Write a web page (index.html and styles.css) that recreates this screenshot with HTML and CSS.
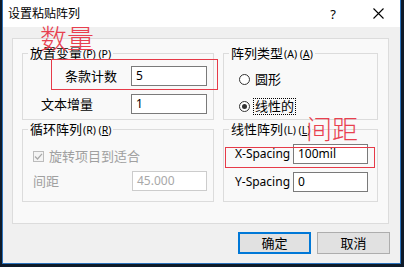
FILE: index.html
```html
<!DOCTYPE html>
<html lang="zh-CN">
<head>
  <meta charset="UTF-8" />
  <title>设置粘贴阵列</title>
  <link rel="stylesheet" href="styles.css">
</head>
<body>

<div class="window">
  <div class="titlebar">
    <span class="title">设置粘贴阵列</span>
    <span class="help">?</span>
    <svg class="close" width="11" height="11" viewBox="0 0 11 11">
      <path d="M0.5 0.5 L10.5 10.5 M10.5 0.5 L0.5 10.5" stroke="#000" stroke-width="1.1" fill="none"/>
    </svg>
  </div>

  <div class="content">
    <div class="panel">
      <div class="group g-place">
        <div class="legend">放置变量<span class="acc">(P) (<u>P</u>)</span></div>
        <div class="row first">
          <span class="lbl ind-count">条款计数</span>
          <div class="field">5</div>
        </div>
        <div class="row">
          <span class="lbl ind-text">文本增量</span>
          <div class="field">1</div>
        </div>
      </div>

      <div class="group g-type">
        <div class="legend">阵列类型<span class="acc">(A) (<u>A</u>)</span></div>
        <div class="radio first"><span class="dot"></span><span class="rtext">圆形</span></div>
        <div class="radio"><span class="dot on"></span><span class="rtext focus">线性的</span></div>
      </div>

      <div class="group g-loop">
        <div class="legend">循环阵列<span class="acc">(R) (<u>R</u>)</span></div>
        <div class="check">
          <svg class="box" width="11" height="11" viewBox="0 0 11 11">
            <rect x="0.5" y="0.5" width="10" height="10" fill="#f4f4f4" stroke="#bcbcbc"/>
            <path d="M2 5.5 L4.5 8 L9 2.8" stroke="#a8a8a8" stroke-width="1.2" fill="none"/>
          </svg>
          <span class="ctext">旋转项目到适合</span>
        </div>
        <div class="row">
          <span class="lbl dim">间距</span>
          <div class="field disabled">45.000</div>
        </div>
      </div>

      <div class="group g-linear">
        <div class="legend">线性阵列<span class="acc">(L) (<u>L</u>)</span></div>
        <div class="row first">
          <span class="lbl latin">X-Spacing</span>
          <div class="field">100mil</div>
        </div>
        <div class="row">
          <span class="lbl latin">Y-Spacing</span>
          <div class="field">0</div>
        </div>
      </div>
    </div>

    <div class="buttons">
      <button class="btn default">确定</button>
      <button class="btn">取消</button>
    </div>
  </div>

  <!-- hand-drawn annotations over the dialog -->
  <div class="mark mark-count"></div>
  <div class="mark mark-gap"></div>
  <div class="note note-count">数量</div>
  <div class="note note-gap">间距</div>
</div>

</body>
</html>
```

FILE: styles.css
```css
:root {
  --frame: #0e1a29;
  --edge: #2c73bd;
  --dialog-bg: #f0f0f0;
  --panel-bg: #f9f9f9;
  --line: #dcdcdc;
  --red: #e8404f;
}
* { box-sizing: border-box; }

body {
  margin: 0;
  background: var(--frame);
  font-family: "Noto Sans", "Noto Sans CJK SC", sans-serif;
  font-size: 13px;
  color: #000;
}

.window {
  position: relative;
  margin-left: 2px;
  width: 399px;
  height: 264px;
  background: var(--dialog-bg);
  border: 1px solid var(--edge);
  border-top: none;
}

.titlebar {
  height: 27px;
  background: #fff;
  display: flex;
  align-items: center;
  padding-left: 5px;
}

.title {
  font-size: 12px;
  line-height: 14px;
  margin-top: 1px;
}

.help {
  margin-left: auto;
  font-size: 13px;
  line-height: 14px;
  margin-right: 37px;
}

.close {
  margin-right: 16px;
}

.content {
  padding: 11px 10px 0 9px;
}

.panel {
  width: 377px;
  height: 186px;
  background: var(--panel-bg);
  border: 1px solid var(--line);
  padding: 7px 10px 0 9px;
  display: grid;
  grid-template-columns: 192px 155px;
  grid-template-rows: 74px 73px;
  column-gap: 9px;
  row-gap: 9px;
}

.group {
  border: 1px solid var(--line);
  margin-top: 7px;
  display: flex;
  flex-direction: column;
}
.g-loop, .g-linear { margin-top: 0; }

.legend {
  align-self: flex-start;
  margin: -8px 0 0 5px;
  padding: 0 2px;
  background: var(--panel-bg);
  line-height: 14px;
  height: 14px;
  white-space: nowrap;
}

.acc {
  font-size: 10.5px;
  margin-left: 1px;
}

.row {
  display: flex;
  align-items: center;
  height: 20px;
  margin-top: 8px;
}
.g-place .row.first { margin-top: 6px; }
.g-loop .row { margin-top: 7px; }

.lbl {
  line-height: 16px;
  white-space: nowrap;
}
.ind-count { padding-left: 42px; }
.ind-text { padding-left: 18px; }
.g-loop .lbl { padding-left: 10px; }
.g-linear .lbl { padding-left: 11px; }
.latin { font-size: 12px; }
.dim { color: #a0a0a0; }

.field {
  margin-left: auto;
  width: 76px;
  height: 20px;
  border: 1px solid #7a7a7a;
  background: #fff;
  font-size: 12px;
  line-height: 18px;
  padding-left: 4px;
}
.g-place .field { margin-right: 6px; }
.g-loop .field { margin-right: 6px; width: 75px; }
.g-linear .field { margin-right: 9px; width: 75px; }
.field.disabled {
  border-color: #cccccc;
  color: #a8a8a8;
}

.radio {
  display: flex;
  align-items: center;
  height: 16px;
  margin-top: 11px;
  padding-left: 15px;
}

.dot {
  width: 11px;
  height: 11px;
  border: 1px solid #333;
  border-radius: 50%;
  background: #fff;
  display: flex;
  align-items: center;
  justify-content: center;
}
.dot.on::after {
  content: "";
  width: 5px;
  height: 5px;
  border-radius: 50%;
  background: #333;
}

.rtext {
  margin-left: 4px;
  line-height: 15px;
  padding: 0 1px;
}
.rtext.focus { outline: 1px dotted #000; }

.check {
  display: flex;
  align-items: center;
  height: 16px;
  margin-top: 12px;
  padding-left: 10px;
}
.ctext {
  margin-left: 5px;
  color: #a0a0a0;
  line-height: 16px;
}

.buttons {
  display: flex;
  justify-content: flex-end;
  gap: 6px;
  margin-top: 8px;
}

.btn {
  width: 73px;
  height: 22px;
  background: #e1e1e1;
  border: 1px solid #adadad;
  font-family: inherit;
  font-size: 13px;
  line-height: 18px;
  padding: 0;
  color: #000;
}
.btn.default { border: 2px solid #0078d7; }

.note {
  position: absolute;
  color: var(--red);
  font-weight: 300;
  white-space: nowrap;
}
.note-count {
  left: 37px;
  top: 25px;
  font-size: 27px;
  line-height: 27px;
}
.note-gap {
  left: 303px;
  top: 116px;
  font-size: 26px;
  line-height: 26px;
}

.mark {
  position: absolute;
  border: 1px solid #e63a48;
}
.mark-count {
  left: 48px;
  top: 59px;
  width: 167px;
  height: 31px;
}
.mark-gap {
  left: 222px;
  top: 147px;
  width: 150px;
  height: 21px;
}
```
